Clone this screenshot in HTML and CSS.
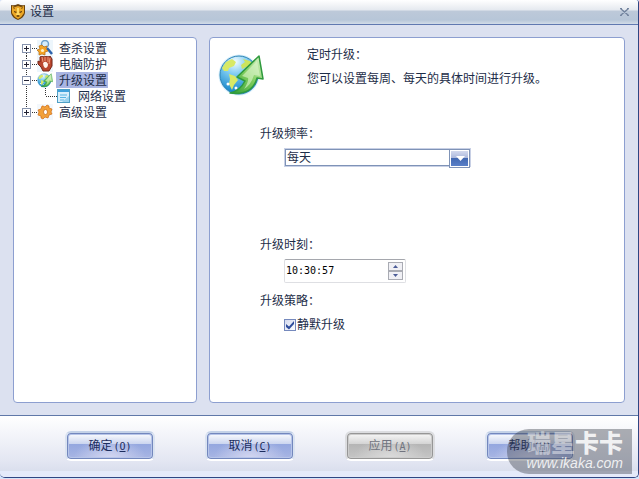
FILE: index.html
```html
<!DOCTYPE html>
<html lang="zh-CN">
<head>
    <meta charset="UTF-8">
    <meta name="viewport" content="width=device-width, initial-scale=1.0">
    <title>设置</title>
    <link rel="stylesheet" href="styles.css">
</head>
<body>
    <div class="window">
        <header class="titlebar">
            <svg class="app-icon" width="16" height="16" viewBox="0 0 16 16">
                <path d="M1 1Q4 2 8 0Q12 2 15 1V9Q14 14 8 16Q2 14 1 9Z" fill="#6b430c"/>
                <path d="M2 2L5 3L8 2L11 3L14 2V9Q12 13 8 15Q4 13 2 9Z" fill="#eba726"/>
                <path d="M3 3L5 4L4 5ZM13 3L11 4L12 5ZM4 7L7 8L6 9L4 8ZM12 7L9 8L10 9L12 8ZM6 12L8 11L10 12L8 13Z" fill="#5d390a"/>
                <path d="M7 4H9V8L10 11H6L7 8Z" fill="#ffd964"/>
            </svg>
            <h1>设置</h1>
            <button class="close" aria-label="关闭">
                <svg width="9" height="8" viewBox="0 0 9 8"><path d="M1 1L8 7M8 1L1 7M0 .5H2M7 .5H9M0 7.5H2M7 7.5H9" stroke="#74859f" stroke-width="1.5" fill="none"/></svg>
            </button>
        </header>

        <main class="content">
            <nav class="panel tree">
                <ul>
                    <li>
                        <button class="expander" aria-label="展开">
                            <svg width="15" height="16" viewBox="0 0 15 16"><path d="M4.5 13V16M10 8.5H15" stroke="#333" stroke-dasharray="1 1"/><rect x=".5" y="4.5" width="8" height="8" fill="#fff" stroke="#8793ad"/><path d="M2 8.5H7M4.5 6V11" stroke="#223"/></svg>
                        </button>
                        <svg width="16" height="16" viewBox="0 0 16 16">
                            <rect width="16" height="16" fill="#edf6fc"/>
                            <path d="M10 8L15 14" stroke="#2c63ac" stroke-width="2.5"/>
                            <circle cx="8" cy="4" r="3.5" fill="#d5edfb" stroke="#6d9fc9" stroke-width="1.5"/>
                            <path d="M5 5L7 7L10 6L9 9L11 11L8 12L8 15L5 14L2 15L2 12L0 10L3 9L2 6Z" fill="#f4a526" stroke="#b86c10" stroke-width=".7"/>
                            <circle cx="5.5" cy="10.5" r="1.6" fill="#fff2c7"/>
                        </svg>
                        <a href="#scan">查杀设置</a>
                    </li>
                    <li>
                        <button class="expander" aria-label="展开">
                            <svg width="15" height="16" viewBox="0 0 15 16"><path d="M4.5 0V16M10 8.5H15" stroke="#333" stroke-dasharray="1 1"/><rect x=".5" y="4.5" width="8" height="8" fill="#fff" stroke="#8793ad"/><path d="M2 8.5H7M4.5 6V11" stroke="#223"/></svg>
                        </button>
                        <svg width="16" height="16" viewBox="0 0 16 16">
                            <rect width="16" height="16" fill="#edf6fc"/>
                            <path d="M3 1L5 0L7 1L9 0L11 1L13 0L15 3V10L12 15L6 15L4 11L1 8V5L3 6Z" fill="#b9472f" stroke="#762619"/>
                            <path d="M5 1L6 6M8 1V5M11 1L11 6M13 2L12 8" stroke="#ee9b79"/>
                            <path d="M6 7Q9 4 11 8Q11 12 8 12Q6 10 6 7Z" fill="#fff4ec"/>
                        </svg>
                        <a href="#protect">电脑防护</a>
                    </li>
                    <li>
                        <button class="expander" aria-label="折叠">
                            <svg width="15" height="16" viewBox="0 0 15 16"><path d="M4.5 0V16M10 8.5H15" stroke="#333" stroke-dasharray="1 1"/><rect x=".5" y="4.5" width="8" height="8" fill="#fff" stroke="#8793ad"/><path d="M2 8.5H7" stroke="#223"/></svg>
                        </button>
                        <svg width="16" height="16" viewBox="1 2 46 44">
                            <use href="#globe-arrow"/>
                        </svg>
                        <a href="#update" class="selected">升级设置</a>
                    </li>
                    <li>
                        <svg width="35" height="16" viewBox="0 0 35 16"><path d="M4.5 0V16M23.5 0V8M24 8.5H35" fill="none" stroke="#333" stroke-dasharray="1 1"/></svg>
                        <svg width="14" height="16" viewBox="0 0 14 16">
                            <rect x=".5" y="1.5" width="12" height="13" fill="#d8effc" stroke="#4f9fc5"/>
                            <path d="M1 3H12" stroke="#3fa1db" stroke-width="2"/>
                            <path d="M3 7H10M3 9.5H9M3 12H7" stroke="#58b5e3"/>
                            <path d="M12 8V14H5Z" fill="#9bd3ef"/>
                        </svg>
                        <a href="#network" class="child">网络设置</a>
                    </li>
                    <li>
                        <button class="expander" aria-label="展开">
                            <svg width="15" height="16" viewBox="0 0 15 16"><path d="M4.5 0V4M10 8.5H15" stroke="#333" stroke-dasharray="1 1"/><rect x=".5" y="4.5" width="8" height="8" fill="#fff" stroke="#8793ad"/><path d="M2 8.5H7M4.5 6V11" stroke="#223"/></svg>
                        </button>
                        <svg width="16" height="16" viewBox="0 0 16 16">
                            <rect width="16" height="16" fill="#f3f8fc"/>
                            <path d="M6 2L8 3L10 1L12 2L12 4L15 5L14 8L15 10L12 11L11 14L8 13L6 15L4 14L4 12L1 11L2 8L1 6L4 5L5 2Z" fill="#f2a039" stroke="#ce6a12" stroke-width=".7"/>
                            <ellipse cx="8.5" cy="8" rx="2" ry="2.5" fill="#fff" stroke="#c26616" stroke-width=".7"/>
                        </svg>
                        <a href="#advanced">高级设置</a>
                    </li>
                </ul>
            </nav>

            <form class="panel settings">
                <div class="intro">
                    <svg class="logo" width="48" height="48" viewBox="0 0 48 48">
                        <defs>
                            <radialGradient id="sea" cx="40%" cy="15%" r="85%">
                                <stop offset="0" stop-color="#f2fbff"/>
                                <stop offset=".4" stop-color="#7ccaf0"/>
                                <stop offset="1" stop-color="#0a7fc6"/>
                            </radialGradient>
                            <linearGradient id="leaf" x1="0" y1="1" x2="1" y2="0">
                                <stop offset="0" stop-color="#2b9a35"/>
                                <stop offset=".5" stop-color="#7dcc5c"/>
                                <stop offset="1" stop-color="#e2f7d2"/>
                            </linearGradient>
                        </defs>
                        <g id="globe-arrow">
                            <circle cx="22" cy="25" r="20.500" fill="#d5eefb"/>
                            <circle cx="22" cy="25" r="19" fill="url(#sea)" stroke="#2d83b4"/>
                            <path d="M5 18L9 12L15 9L19 12L17 16L12 18L11 21L7 21ZM12 24L18 26L21 30L17 35L15 40L12 34L13 29Z" fill="#d8e965"/>
                            <path d="M26 9L33 11L38 16L34 19L29 17L25 19L24 15L28 12Z" fill="#cde45d"/>
                            <circle cx="11" cy="34" r="1.500" fill="#fff"/>
                            <circle cx="19" cy="38" r="1.500" fill="#fff"/>
                            <path d="M42 6L46 29L40 28Q35 46 13 43Q23 41 28 31L20 27Z" fill="url(#leaf)" stroke="#2f9a3d" stroke-width="1.500" stroke-linejoin="round"/>
                            <path d="M40 11L43 26L37 25Q34 35 27 39Q32 31 31 28L25 26Z" fill="#dff6ce" opacity=".6"/>
                        </g>
                    </svg>
                    <div class="intro-text">
                        <h2>定时升级：</h2>
                        <p>您可以设置每周、每天的具体时间进行升级。</p>
                    </div>
                </div>

                <div class="fields">
                    <label for="frequency">升级频率：</label>
                    <div class="select-box">
                        <select id="frequency">
                            <option>每天</option>
                        </select>
                    </div>

                    <label for="time">升级时刻：</label>
                    <div class="time-box">
                        <input type="text" id="time" value="10:30:57">
                        <div class="spin">
                            <button type="button" aria-label="增加"><svg width="5" height="3" viewBox="0 0 5 3"><path d="M0 3L2.5 0L5 3Z" fill="#4b5c97"/></svg></button>
                            <button type="button" aria-label="减少"><svg width="5" height="3" viewBox="0 0 5 3"><path d="M0 0L2.5 3L5 0Z" fill="#4b5c97"/></svg></button>
                        </div>
                    </div>

                    <div class="policy">升级策略：</div>
                    <label class="check"><input type="checkbox" checked>静默升级</label>
                </div>
            </form>
        </main>

        <footer class="actions">
            <button>确定<span>(<u>O</u>)</span></button>
            <button>取消<span>(<u>C</u>)</span></button>
            <button disabled>应用<span>(<u>A</u>)</span></button>
            <button>帮助<span>(<u>H</u>)</span></button>
        </footer>
    </div>

    <div class="watermark">
        <strong><span>瑞星</span>卡卡</strong>
        <em>www.ikaka.com</em>
    </div>
</body>
</html>
```

FILE: styles.css
```css
* {
    box-sizing: border-box;
}
body {
    margin: 0;
    height: 100vh;
    padding-bottom: 1px;
    overflow: hidden;
    font-family: "Liberation Sans", "Noto Sans CJK SC", sans-serif;
    font-size: 12px;
    line-height: 16px;
    color: #1d2d48;
    background: #d5e4fa;
}
button, input, select {
    font: inherit;
    color: inherit;
    margin: 0;
    padding: 0;
}
h1, h2, p, ul {
    margin: 0;
    padding: 0;
    font-size: 12px;
    font-weight: normal;
}
svg {
    display: block;
    flex: none;
}

/* Window frame */
.window {
    display: flex;
    flex-direction: column;
    height: 100%;
    background: #dce1f0;
    border-right: 1px solid #2f4683;
    border-bottom: 1px solid #2f4683;
    border-radius: 3px 3px 5px 5px;
    overflow: hidden;
}
.titlebar {
    display: flex;
    align-items: center;
    gap: 3px;
    height: 25px;
    padding: 0 9px 0 10px;
    border-bottom: 1px solid #6078b0;
    background: linear-gradient(#fff 0, #e5e9ef 10px, #bdc9d9 11px, #b7c6d8 20px, #d2dce8 24px);
}
.titlebar h1 {
    flex: 1;
    padding-left: 1px;
}
.close {
    border: none;
    background: none;
}

/* Two panels */
.content {
    flex: 1;
    display: flex;
    gap: 12px;
    padding: 12px 13px;
}
.panel {
    background: #fff;
    border: 1px solid #8d9fd0;
    border-radius: 4px;
}

/* Settings tree */
.tree {
    flex: 0 0 184px;
    padding: 2px 8px;
}
.tree li {
    display: flex;
    align-items: center;
    height: 16px;
}
.expander {
    border: none;
    background: none;
}
.tree a {
    height: 16px;
    line-height: 18px;
    margin-left: 3px;
    padding: 0 1px 0 3px;
    color: inherit;
    text-decoration: none;
}
.tree a.child {
    padding-left: 4px;
}
.tree a.selected {
    background: #a9b5e2;
}

/* Update settings */
.settings {
    flex: 1;
    padding: 9px 8px;
}
.intro {
    display: flex;
    gap: 41px;
    margin-bottom: 28px;
}
.logo {
    margin-top: 3px;
    margin-left: -1px;
    margin-right: 1px;
}
.intro-text h2 {
    margin-bottom: 8px;
}
.fields {
    display: flex;
    flex-direction: column;
    align-items: flex-start;
    padding-left: 42px;
}
.intro + .fields {
    margin-top: 1px;
}
.select-box {
    position: relative;
    width: 187px;
    margin: 6px 0 70px 24px;
}
.select-box select {
    display: block;
    appearance: none;
    width: 100%;
    height: 19px;
    padding-left: 2px;
    border: 1px solid #c8d0e5;
    border-radius: 0;
    outline: 1px solid #7f93b7;
    outline-offset: -2px;
    background: #fff;
}
.select-box::before {
    content: "";
    position: absolute;
    top: 1px;
    right: 1px;
    width: 19px;
    height: 17px;
    border: 1px solid #7f93b7;
    box-shadow: inset 0 0 0 1px #fff;
    background: linear-gradient(#d9def0, #a8b5da 50%, #4369b2 50%, #5c82cb);
    pointer-events: none;
}
.select-box::after {
    content: "";
    position: absolute;
    top: 8px;
    right: 6px;
    width: 9px;
    height: 5px;
    background: #fff;
    clip-path: polygon(0 0, 100% 0, 50% 100%);
    pointer-events: none;
}
.time-box {
    display: flex;
    align-items: center;
    width: 122px;
    height: 24px;
    margin: 6px 0 10px 24px;
    padding: 0 2px 0 1px;
    border: 1px solid #dedfe3;
    border-top-color: #a5a7ad;
    border-radius: 2px;
}
.time-box input {
    flex: 1;
    min-width: 0;
    border: none;
    outline: none;
    background: none;
    color: #000;
    font-family: "DejaVu Sans Mono", monospace;
    font-size: 10px;
}
.spin {
    display: flex;
    flex-direction: column;
    width: 15px;
}
.spin button {
    display: flex;
    align-items: center;
    justify-content: center;
    height: 9px;
    border: 1px solid #a9abb3;
    background: #f0f0f5;
}
.check {
    display: flex;
    align-items: center;
    gap: 1px;
    margin: 8px 0 0 24px;
}
.check input {
    appearance: none;
    width: 12px;
    height: 12px;
    border: 1px solid #7589bd;
    background: linear-gradient(135deg, #d3d9ee, #fff);
}
.check input:checked::before {
    content: "";
    display: block;
    width: 10px;
    height: 10px;
    background: #2f4d9c;
    clip-path: polygon(10% 40%, 40% 65%, 90% 10%, 90% 40%, 40% 95%, 10% 70%);
}

/* Bottom buttons */
.actions {
    display: flex;
    gap: 50px;
    padding: 15px 0 15px 65px;
    border-top: 1px solid #6078a8;
    border-bottom: 1px solid #e4eafa;
    background: linear-gradient(#fff, #e3e6f2 45px, #dadfed 55px, #e4eafa 55px);
}
.actions button {
    width: 90px;
    height: 30px;
    border: 2px solid #fff;
    border-top-color: #c4d2e8;
    border-left-color: #dae3f1;
    border-right-color: #dae3f1;
    border-radius: 6px;
    color: #1b2d5e;
    background: radial-gradient(ellipse at 50% 100%, #d5d8f1, transparent 60%),
        linear-gradient(#fff, #cbd5ef 42%, #94a7df 43%, #a9b6e4);
    box-shadow: inset 0 0 0 1px #7387bd, inset 0 0 0 2px #b7c5e9;
}
.actions button:disabled {
    color: #707480;
    border-color: #dcdde0;
    border-bottom-color: #fff;
    background: radial-gradient(ellipse at 50% 100%, #dcdcdc, transparent 60%),
        linear-gradient(#fafafa, #d4d4d4 42%, #b5b5b5 43%, #c6c6c6);
    box-shadow: inset 0 0 0 1px #969696, inset 0 0 0 2px #ccc;
}
.actions span {
    margin-left: 1px;
    font-family: "DejaVu Sans Mono", monospace;
    font-size: 10px;
}

/* Site mark over the corner */
.watermark {
    position: absolute;
    right: 7px;
    bottom: 5px;
    display: flex;
    flex-direction: column;
    align-items: flex-end;
    justify-content: center;
    width: 125px;
    height: 45px;
    padding-right: 9px;
    border-radius: 22px 0 0 22px;
    color: rgba(255, 255, 255, 0.85);
    background: rgba(55, 60, 70, 0.4);
    pointer-events: none;
}
.watermark strong {
    font-size: 24px;
    line-height: 22px;
    font-weight: 900;
}
.watermark strong span {
    color: rgba(255, 255, 255, 0.45);
}
.watermark em {
    font-size: 14px;
    line-height: 16px;
}
```
